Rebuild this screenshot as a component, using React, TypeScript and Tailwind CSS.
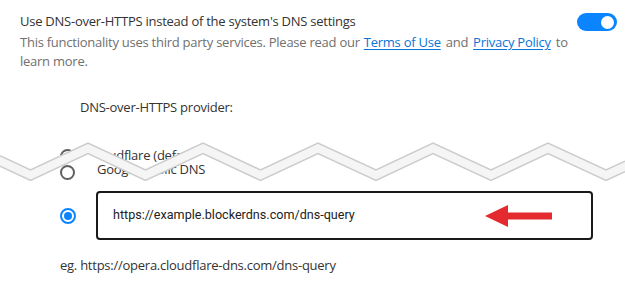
import React from "react";

const seg = "font-['Open_Sans','Noto_Sans',sans-serif]";

export default function App() {
  const top = [
    [0, 38.7], [30.5, 53], [88, 26], [145.5, 53], [203, 26], [260.5, 53], [318, 26],
    [376, 53], [433, 26], [491, 53], [548, 26], [606, 53], [625, 44.1],
  ];
  const bottom = top.map(([x, y]) => [x, y + 10.5]);
  const topStr = top.map((p) => p.join(",")).join(" ");
  const botStr = bottom.map((p) => p.join(",")).join(" ");
  const bandStr = [...top, ...bottom.slice().reverse()].map((p) => p.join(",")).join(" ");

  return (
    <div className={`w-[625px] h-[284px] bg-white overflow-hidden relative ${seg} tracking-[-0.25px]`}>
      <div className="flex items-start pl-[20px] pr-[8px] pt-[11px]">
        <div className="flex-1 min-w-0">
          <div className="text-[13px] leading-[20px] text-[#333333] whitespace-nowrap">
            Use DNS-over-HTTPS instead of the system's DNS settings
          </div>
          <div className="mt-[2px] text-[13px] leading-[19px] text-[#707070] whitespace-nowrap">
            This functionality uses third party services. Please read our
            <span className="inline-block w-[4px]" />
            <a className="text-[#0a74d6] underline underline-offset-2">Terms of Use</a>
            <span className="inline-block w-[5px]" />and<span className="inline-block w-[5px]" />
            <a className="text-[#0a74d6] underline underline-offset-2">Privacy Policy</a>
            <span className="inline-block w-[5px]" />to
            <br />
            learn more.
          </div>
        </div>
        <div className="mt-[2px] w-[40px] h-[18px] rounded-full bg-[#0a84ff] flex items-center justify-end pr-[3px] shrink-0">
          <div className="w-[13px] h-[13px] rounded-full bg-white" />
        </div>
      </div>

      <div className="mt-[26px] pl-[80px] text-[13px] leading-[20px] text-[#333333]">
        DNS-over-HTTPS provider:
      </div>

      <div className="relative h-[74px]">
        <div className="absolute left-0 top-[43px] h-[20px] w-full flex items-center">
          <div className="ml-[60px] w-[15px] h-[15px] rounded-full border-2 border-[#5f5f5f] mt-[4px]" />
          <div className="ml-[22px] text-[13px] text-[#333333]">Google Public DNS</div>
        </div>
        <div className="absolute inset-0 bg-white [clip-path:polygon(0px_0px,625px_0px,625px_44.1px,606px_53px,548px_26px,491px_53px,433px_26px,376px_53px,318px_26px,260.5px_53px,203px_26px,145.5px_53px,88px_26px,30.5px_53px,0px_38.7px)]">
          <div className="absolute left-0 top-[29px] h-[20px] w-full flex items-center">
            <div className="ml-[60px] w-[15px] h-[15px] rounded-full border-2 border-[#5f5f5f]" />
            <div className="ml-[15px] text-[13px] text-[#333333]">Cloudflare (default)</div>
          </div>
        </div>
        <svg className="absolute inset-0" width="625" height="74" viewBox="0 0 625 74">
          <polygon points={bandStr} fill="#f5f5f5" />
          <polyline points={topStr} fill="none" stroke="#cccccc" strokeWidth="1.5" />
          <polyline points={botStr} fill="none" stroke="#cccccc" strokeWidth="1.5" />
        </svg>
      </div>

      <div className="relative flex items-center h-[49px]">
        <div className="ml-[60px] w-[16px] h-[16px] rounded-full border-2 border-[#0a84ff] flex items-center justify-center">
          <div className="w-[8px] h-[8px] rounded-full bg-[#0a84ff]" />
        </div>
        <div className="ml-[20px] w-[497px] h-[49px] rounded-[4px] border-2 border-[#1a1a1a] flex items-center pl-[15px] font-['Roboto',sans-serif] tracking-normal text-[12.6px] text-[#222222]">
          https://example.blockerdns.com/dns-query
        </div>
        <svg className="absolute left-[485px] top-[13px]" width="70" height="24" viewBox="0 0 70 24">
          <polygon points="0,12 23,1 23,8.5 67,8.5 67,15.5 23,15.5 23,23" fill="#e32b2f" />
        </svg>
      </div>

      <div className="mt-[15px] pl-[60px] text-[13px] leading-[20px] text-[#333333]">
        eg. https://opera.cloudflare-dns.com/dns-query
      </div>
    </div>
  );
}
